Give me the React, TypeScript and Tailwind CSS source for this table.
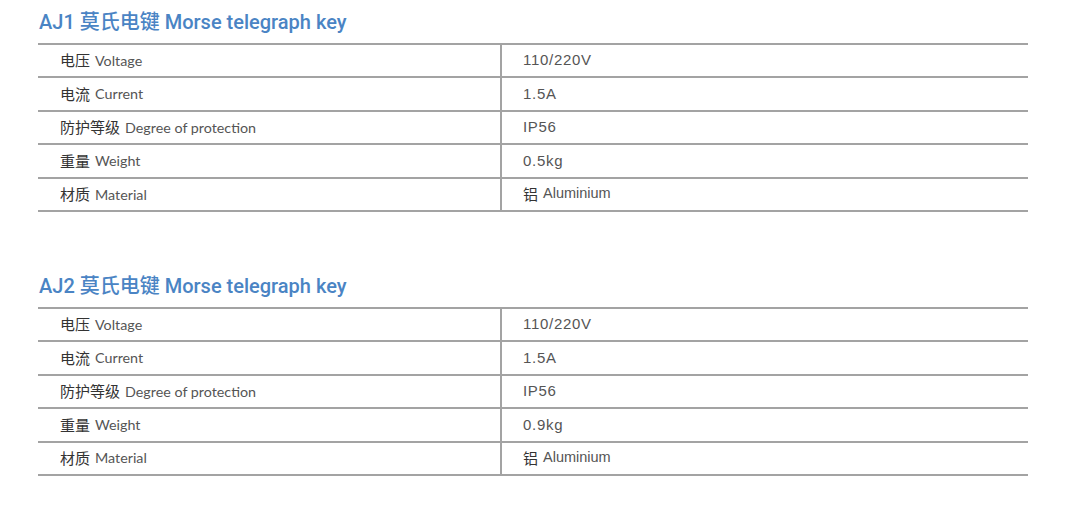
import React from "react"

type Row = { zh: string; en: string; value: string; valueZh?: string }

const rows1: Row[] = [
  { zh: "电压", en: "Voltage", value: "110/220V" },
  { zh: "电流", en: "Current", value: "1.5A" },
  { zh: "防护等级", en: "Degree of protection", value: "IP56" },
  { zh: "重量", en: "Weight", value: "0.5kg" },
  { zh: "材质", en: "Material", value: "Aluminium", valueZh: "铝" },
]

const rows2: Row[] = rows1.map((r) => (r.zh === "重量" ? { ...r, value: "0.9kg" } : r))

const cjk = "font-['Noto_Sans_CJK_SC',sans-serif]"

function SpecTable({ title, rows }: { title: string; rows: Row[] }) {
  return (
    <div>
      <h2 className="h-[42px] pt-[8px] pl-[1px] text-[20px] leading-[26px] font-medium text-[#4a84c4] font-['Roboto','Noto_Sans_CJK_SC',sans-serif]">
        {title}
      </h2>
      <div className="w-[990px] border-t-2 border-[#a3a3a3]">
        {rows.map((r) => (
          <div key={r.zh} className="flex h-[33.4px] border-b-2 border-[#a3a3a3]">
            <div className="w-[462px] pl-[22px] flex items-center text-[15px] text-[#333]">
              <span className={cjk}>{r.zh}</span>
              <span className="ml-[5px] text-[14.3px] text-[#555] font-['Lato',sans-serif]">{r.en}</span>
            </div>
            <div className="flex-1 border-l-2 border-[#a3a3a3] pl-[21px] flex items-center text-[15px] text-[#555] font-['Liberation_Sans',sans-serif]">
              {r.valueZh && <span className={`${cjk} mr-[5px] text-[#333]`}>{r.valueZh}</span>}
              <span className={r.valueZh ? "text-[14.5px]" : "tracking-[0.7px]"}>{r.value}</span>
            </div>
          </div>
        ))}
      </div>
    </div>
  )
}

export default function App() {
  return (
    <div className="w-[1070px] h-[513px] bg-white pl-[38px] pt-[1px]">
      <SpecTable title="AJ1 莫氏电键 Morse telegraph key" rows={rows1} />
      <div className="h-[53px]" />
      <SpecTable title="AJ2 莫氏电键 Morse telegraph key" rows={rows2} />
    </div>
  )
}
